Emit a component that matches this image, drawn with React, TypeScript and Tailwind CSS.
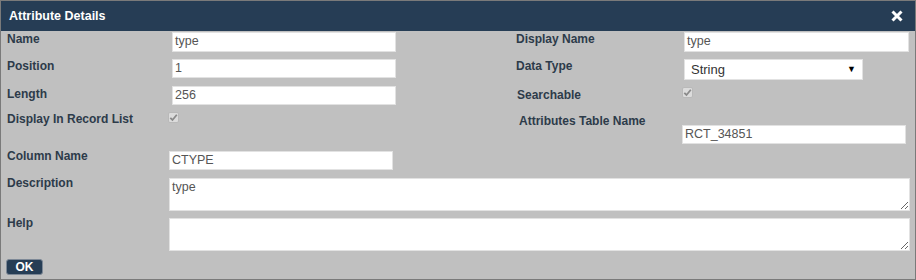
import React from "react";

// Attribute details dialog (read-only form)

function Check() {
  return (
    <div className="w-[11px] h-[11px] rounded-[2px] border border-[#b9b9b9] bg-[#dcdcdc] flex items-center justify-center">
      <svg width="9" height="9" viewBox="0 0 9 9">
        <path d="M1.3 4.8 L3.5 7 L7.8 1.8" fill="none" stroke="#8a8a8a" strokeWidth="1.8" />
      </svg>
    </div>
  );
}

function Field({ value, className }: { value: string; className: string }) {
  return (
    <div className={`bg-white border border-[#e2e2e2] pl-[2px] text-[12.5px] leading-[17px] text-[#555] ${className}`}>
      {value}
    </div>
  );
}

function Label({ text, className = "" }: { text: string; className?: string }) {
  return <div className={`text-[12px] leading-[14px] font-bold text-[#2d3b4a] ${className}`}>{text}</div>;
}

export default function App() {
  return (
    <div className="w-[916px] h-[280px] border border-[#7a7a7a] bg-[#c0c0c0] flex flex-col font-['Liberation_Sans',Arial,sans-serif]">
      {/* Titre */}
      <div className="h-[30px] bg-[#263d55] flex items-center justify-between pl-[8px] pr-[12px]">
        <span className="text-white font-bold text-[12.5px]">Attribute Details</span>
        <svg width="12" height="12" viewBox="0 0 12 12">
          <path d="M1.5 1.5 L10.5 10.5 M10.5 1.5 L1.5 10.5" stroke="white" strokeWidth="3" />
        </svg>
      </div>

      <div className="flex flex-col pl-[6px]">
        {/* Name / Display Name */}
        <div className="flex h-[27px] mt-[1px]">
          <div className="flex w-[509px]">
            <Label text="Name" className="w-[165px] pt-[0px]" />
            <Field value="type" className="w-[224px] h-[20px]" />
          </div>
          <Label text="Display Name" className="w-[168px]" />
          <Field value="type" className="w-[225px] h-[20px]" />
        </div>

        {/* Position / Data Type */}
        <div className="flex h-[27px]">
          <div className="flex w-[509px]">
            <Label text="Position" className="w-[165px]" />
            <Field value="1" className="w-[224px] h-[19px]" />
          </div>
          <Label text="Data Type" className="w-[168px]" />
          <div className="w-[179px] h-[21px] bg-white border border-[#e2e2e2] flex items-center justify-between pl-[6px] pr-[6px] text-[13px] text-[#333]">
            <span>String</span>
            <span className="text-[9px] text-black">▼</span>
          </div>
        </div>

        {/* Length / Searchable */}
        <div className="flex h-[26px]">
          <div className="flex w-[509px]">
            <Label text="Length" className="w-[165px] pt-[1px]" />
            <Field value="256" className="w-[224px] h-[19px]" />
          </div>
          <Label text="Searchable" className="w-[166px] pt-[2px] pl-[1px]" />
          <div className="mt-[1px]">
            <Check />
          </div>
        </div>

        {/* Display In Record List / Attributes Table Name */}
        <div className="flex h-[37px]">
          <div className="flex w-[509px]">
            <Label text="Display In Record List" className="w-[161px]" />
            <Check />
          </div>
          <div className="flex flex-col">
            <Label text="Attributes Table Name" className="pl-[3px] h-[13px] pt-[2px]" />
            <Field value="RCT_34851" className="w-[224px] h-[19px] ml-[166px] mt-[0px]" />
          </div>
        </div>

        {/* Column Name */}
        <div className="flex h-[29px]">
          <Label text="Column Name" className="w-[162px]" />
          <Field value="CTYPE" className="w-[224px] h-[19px] mt-[2px]" />
        </div>

        {/* Description */}
        <div className="flex h-[40px]">
          <Label text="Description" className="w-[162px] -mt-[2px]" />
          <textarea
            readOnly
            defaultValue="type"
            className="w-[741px] h-[33px] bg-white border border-[#e2e2e2] pl-[2px] text-[12.5px] leading-[17px] text-[#555] outline-none"
          />
        </div>

        {/* Help */}
        <div className="flex h-[41px]">
          <Label text="Help" className="w-[162px] -mt-[2px]" />
          <textarea
            readOnly
            className="w-[741px] h-[33px] bg-white border border-[#e2e2e2] pl-[2px] text-[12.5px] text-[#555] outline-none"
          />
        </div>

        <div className="flex">
          <button className="-ml-[1px] w-[37px] h-[16px] rounded-[3px] bg-[#263d55] border border-[#7d8896] text-white font-bold text-[12px] leading-[14px]">
            OK
          </button>
        </div>
      </div>
    </div>
  );
}
